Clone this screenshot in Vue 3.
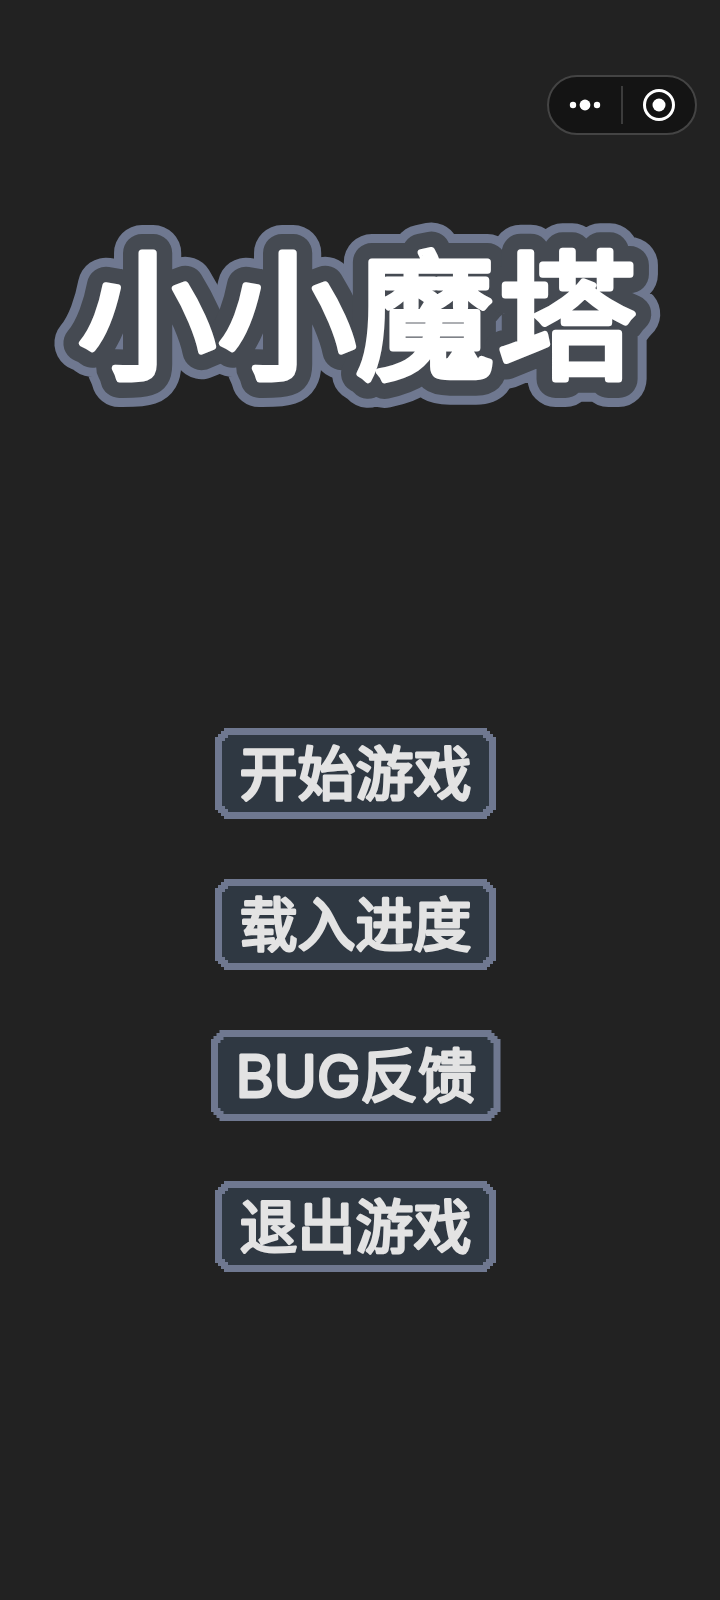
<script setup>
const buttons = [
  { t: '开始游戏', w: 281 },
  { t: '载入进度', w: 281 },
  { t: 'BUG反馈', w: 290 },
  { t: '退出游戏', w: 281 },
]
const chars = [
  { t: '小', x: 147 },
  { t: '小', x: 287 },
  { t: '魔', x: 425 },
  { t: '塔', x: 567 },
]
</script>

<template>
  <main class="page">
    <div class="capsule-row">
      <div class="capsule">
        <div class="cap-part">
          <svg width="32" height="12" viewBox="0 0 32 12"><circle cx="4" cy="6" r="3.2" fill="#fff"/><circle cx="16" cy="6" r="5.4" fill="#fff"/><circle cx="28" cy="6" r="3.2" fill="#fff"/></svg>
        </div>
        <span class="cap-line"></span>
        <div class="cap-part">
          <svg width="34" height="34" viewBox="0 0 34 34"><circle cx="17" cy="17" r="14.5" fill="none" stroke="#fff" stroke-width="3"/><circle cx="17" cy="17" r="6.5" fill="#fff"/></svg>
        </div>
      </div>
    </div>

    <svg class="title" width="720" height="260" viewBox="0 0 720 260">
      <g class="t-font" text-anchor="middle">
        <text v-for="(c, i) in chars" :key="'o'+i" :x="c.x" y="177" class="t-outer">{{ c.t }}</text>
        <text v-for="(c, i) in chars" :key="'m'+i" :x="c.x" y="177" class="t-mid">{{ c.t }}</text>
        <text v-for="(c, i) in chars" :key="'f'+i" :x="c.x" y="177" class="t-fill">{{ c.t }}</text>
      </g>
    </svg>

    <div class="menu">
      <div v-for="b in buttons" :key="b.t" class="btn" :style="{ width: b.w + 'px' }">
        <div class="btn-inner">
          <svg class="btn-label" :width="b.w - 14" height="90" :viewBox="`0 0 ${b.w - 14} 90`">
            <text x="50%" y="66" text-anchor="middle">{{ b.t }}</text>
          </svg>
        </div>
      </div>
    </div>
  </main>
</template>

<style>
html, body { margin: 0; background: #222222; }
</style>

<style scoped>
.page {
  width: 720px;
  height: 1600px;
  background: #222222;
  display: flex;
  flex-direction: column;
  overflow: hidden;
}
.capsule-row {
  display: flex;
  justify-content: flex-end;
  padding: 75px 23px 0 0;
}
.capsule {
  width: 150px;
  height: 60px;
  box-sizing: border-box;
  border: 2px solid #444;
  border-radius: 30px;
  background: #141414;
  display: flex;
  align-items: center;
}
.cap-part { flex: 1; display: flex; justify-content: center; align-items: center; }
.cap-line { width: 2px; height: 38px; background: #3c3c3c; }
.title { display: block; margin-top: 55px; }
.t-font {
  font-family: "Noto Sans CJK SC", sans-serif;
  font-size: 138px;
  font-weight: 400;
}
.t-outer { fill: #6f7890; stroke: #6f7890; stroke-width: 56px; stroke-linejoin: round; stroke-linecap: round; }
.t-mid { fill: #454a52; stroke: #454a52; stroke-width: 38px; stroke-linejoin: round; stroke-linecap: round; }
.t-fill { fill: #fff; stroke: #fff; stroke-width: 7px; stroke-linejoin: round; stroke-linecap: round; }
.menu {
  margin-top: 278px;
  padding-right: 9px;
  display: flex;
  flex-direction: column;
  align-items: center;
  gap: 60px;
}
.btn {
  box-sizing: border-box;
  height: 91px;
  background: #6f7890;
  padding: 7px;
  clip-path: polygon(0 9px, 3px 9px, 3px 6px, 6px 6px, 6px 3px, 9px 3px, 9px 0, calc(100% - 9px) 0, calc(100% - 9px) 3px, calc(100% - 6px) 3px, calc(100% - 6px) 6px, calc(100% - 3px) 6px, calc(100% - 3px) 9px, 100% 9px, 100% calc(100% - 9px), calc(100% - 3px) calc(100% - 9px), calc(100% - 3px) calc(100% - 6px), calc(100% - 6px) calc(100% - 6px), calc(100% - 6px) calc(100% - 3px), calc(100% - 9px) calc(100% - 3px), calc(100% - 9px) 100%, 9px 100%, 9px calc(100% - 3px), 6px calc(100% - 3px), 6px calc(100% - 6px), 3px calc(100% - 6px), 3px calc(100% - 9px), 0 calc(100% - 9px));
}
.btn-inner {
  height: 77px;
  background: #2f3842;
  display: flex;
  align-items: center;
  clip-path: polygon(0 6px, 3px 6px, 3px 3px, 6px 3px, 6px 0, calc(100% - 6px) 0, calc(100% - 6px) 3px, calc(100% - 3px) 3px, calc(100% - 3px) 6px, 100% 6px, 100% calc(100% - 6px), calc(100% - 3px) calc(100% - 6px), calc(100% - 3px) calc(100% - 3px), calc(100% - 6px) calc(100% - 3px), calc(100% - 6px) 100%, 6px 100%, 6px calc(100% - 3px), 3px calc(100% - 3px), 3px calc(100% - 6px), 0 calc(100% - 6px));
}
.btn-label { display: block; flex: none; overflow: visible; }
.btn-label text {
  font-family: Inter, "Noto Sans CJK SC", sans-serif;
  font-size: 58px;
  font-weight: 400;
  fill: #e3e3e3;
  stroke: #e3e3e3;
  stroke-width: 3px;
  stroke-linejoin: round;
  stroke-linecap: round;
}
</style>
